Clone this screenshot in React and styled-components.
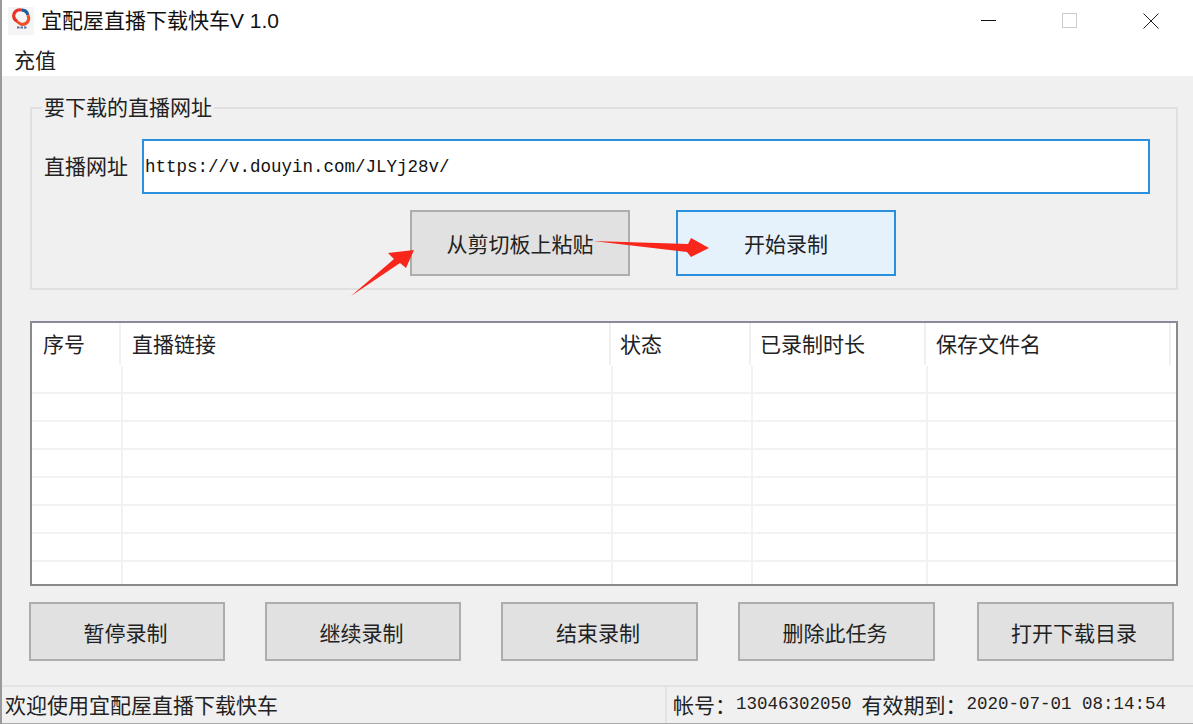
import React from "react";
import styled, { createGlobalStyle } from "styled-components";

const CJK = `"Noto Sans CJK SC", "Liberation Sans", sans-serif`;
const MONO = `"Liberation Mono", "Noto Sans CJK SC", monospace`;

const GlobalStyle = createGlobalStyle`
  html, body {
    margin: 0;
    padding: 0;
    background: #fff;
    overflow: hidden;
  }
  * {
    box-sizing: border-box;
  }
`;

const columns = [
  { title: "序号", width: 89, pad: 11 },
  { title: "直播链接", width: 490, pad: 11 },
  { title: "状态", width: 140, pad: 9 },
  { title: "已录制时长", width: 175, pad: 9 },
  { title: "保存文件名", width: 245, pad: 10 },
];

const rowColumns = [91, 490, 140, 175];
const actions = [
  { label: "暂停录制", width: 196 },
  { label: "继续录制", width: 196 },
  { label: "结束录制", width: 197 },
  { label: "删除此任务", width: 197 },
  { label: "打开下载目录", width: 197, last: true },
];

export default function App() {
  return (
    <Window>
      <GlobalStyle />
      <TitleBar>
        <AppTitle>
          <AppIcon />
          <TitleText>
            宜配屋直播下载快车<TitleLatin>V 1.0</TitleLatin>
          </TitleText>
        </AppTitle>
        <WindowControls>
          <ControlIcon viewBox="0 0 16 16">
            <path d="M0 7.5h15" stroke="#111" strokeWidth="1" />
          </ControlIcon>
          <ControlIcon viewBox="0 0 16 16">
            <rect x="0.5" y="0.5" width="14" height="14" fill="none" stroke="#ccc" />
          </ControlIcon>
          <ControlIcon viewBox="0 0 16 16">
            <path d="M0.5 0.5l15 15M15.5 0.5l-15 15" stroke="#222" strokeWidth="1" fill="none" />
          </ControlIcon>
        </WindowControls>
      </TitleBar>
      <MenuBar>
        <MenuItem>充值</MenuItem>
      </MenuBar>
      <Body>
        <Group>
          <Legend>要下载的直播网址</Legend>
          <UrlRow>
            <UrlLabel>直播网址</UrlLabel>
            <UrlField>https://v.douyin.com/JLYj28v/</UrlField>
          </UrlRow>
          <CommandRow>
            <PushButton>从剪切板上粘贴</PushButton>
            <PushButton $active>开始录制</PushButton>
          </CommandRow>
          <ArrowLayer viewBox="33 109 760 200">
            <path d="M353 296 L396 259 L390 253 L416 250 L408 268 L402 263 Z" fill="#f9261c" />
            <path d="M595 241 L690 244 L693 238 L711 248 L693 257 L689 252 Z" fill="#f9261c" />
          </ArrowLayer>
        </Group>
        <TaskTable>
          <HeaderRow>
            {columns.map((col) => (
              <HeaderCell key={col.title} $width={col.width} $pad={col.pad}>
                {col.title}
              </HeaderCell>
            ))}
          </HeaderRow>
          {Array.from({ length: 8 }).map((_, i) => (
            <EmptyRow key={i}>
              {rowColumns.map((w, j) => (
                <EmptyCell key={j} $width={w} />
              ))}
            </EmptyRow>
          ))}
        </TaskTable>
        <ActionRow>
          {actions.map((a) => (
            <ActionButton key={a.label} $width={a.width} $last={a.last}>
              {a.label}
            </ActionButton>
          ))}
        </ActionRow>
      </Body>
      <StatusBar>
        <StatusLeft>欢迎使用宜配屋直播下载快车</StatusLeft>
        <StatusRight>
          <span>帐号：</span>
          <StatusValue>13046302050</StatusValue>
          <StatusGap />
          <span>有效期到：</span>
          <StatusValue>2020-07-01 08:14:54</StatusValue>
        </StatusRight>
      </StatusBar>
    </Window>
  );
}

function AppIcon() {
  return (
    <IconBox viewBox="0 0 26 28">
      <rect width="26" height="28" fill="#f5f5f5" />
      <path d="M9.5 14.5 A6 6 0 0 1 14 3.2" fill="none" stroke="#e8332a" strokeWidth="3.2" />
      <path d="M14 3.2 A6 6 0 0 1 19.8 8" fill="none" stroke="#1f5f9a" strokeWidth="3.2" />
      <path d="M19.8 8 A6 6 0 0 1 9.5 14.5" fill="none" stroke="#f0502a" strokeWidth="3.2" />
      <path d="M9 20.5h10" stroke="#5a6f9a" strokeWidth="2" strokeDasharray="2.5 1" />
    </IconBox>
  );
}

const Window = styled.div`
  width: 1193px;
  height: 724px;
  display: flex;
  flex-direction: column;
  border-left: 2px solid #9a9a9a;
  background: #f0f0f0;
  color: #1c1c1c;
  font-family: ${CJK};
  font-size: 21px;
  overflow: hidden;
`;

const TitleBar = styled.div`
  height: 42px;
  background: #fff;
  display: flex;
  align-items: center;
  justify-content: space-between;
  padding: 0 34px 0 6px;
`;

const AppTitle = styled.div`
  display: flex;
  align-items: center;
  gap: 7px;
`;

const IconBox = styled.svg`
  width: 26px;
  height: 28px;
  flex: none;
`;

const TitleText = styled.div`
  color: #111;
  line-height: 28px;
  margin-top: -2px;
`;

const TitleLatin = styled.span`
  font-family: "Liberation Sans", sans-serif;
  font-size: 21px;
`;

const WindowControls = styled.div`
  display: flex;
  gap: 65px;
`;

const ControlIcon = styled.svg`
  width: 16px;
  height: 16px;
  display: block;
`;

const MenuBar = styled.div`
  height: 34px;
  background: #fff;
  display: flex;
  align-items: center;
  padding-left: 12px;
`;

const MenuItem = styled.div`
  color: #222;
  line-height: 30px;
`;

const Body = styled.div`
  flex: 1;
  display: flex;
  flex-direction: column;
  padding-top: 31px;
`;

const Group = styled.div`
  position: relative;
  height: 183px;
  margin: 0 15px 0 28px;
  border: 2px solid #e0e0e0;
  padding: 30px 26px 0 12px;
`;

const Legend = styled.div`
  position: absolute;
  top: -17px;
  left: 10px;
  background: #f0f0f0;
  padding: 0 2px;
  line-height: 28px;
  color: #222;
`;

const UrlRow = styled.div`
  display: flex;
  align-items: center;
  height: 55px;
`;

const UrlLabel = styled.div`
  width: 98px;
  flex: none;
  line-height: 28px;
  margin-top: -3px;
  color: #222;
`;

const UrlField = styled.div`
  flex: 1;
  height: 55px;
  background: #fff;
  border: 2px solid #2a8fdc;
  display: flex;
  align-items: center;
  padding: 1px 0 0 1px;
  font-family: ${MONO};
  font-size: 17.5px;
  color: #111;
`;

const CommandRow = styled.div`
  display: flex;
  gap: 46px;
  margin-top: 16px;
  margin-left: 366px;
`;

const PushButton = styled.div`
  width: 220px;
  height: 66px;
  display: flex;
  align-items: center;
  justify-content: center;
  background: ${(p) => (p.$active ? "#e5f1fb" : "#e1e1e1")};
  border: 2px solid ${(p) => (p.$active ? "#2a8fdc" : "#adadad")};
  color: #222;
`;

/* annotation arrows drawn over the group, viewBox is in page coordinates */
const ArrowLayer = styled.svg`
  position: absolute;
  left: -1px;
  top: 0;
  width: 760px;
  height: 200px;
  overflow: visible;
  pointer-events: none;
`;

const TaskTable = styled.div`
  margin: 31px 15px 0 28px;
  height: 265px;
  background: #fff;
  border: 2px solid #8a8a8a;
  border-top-color: #8a8a98;
  overflow: hidden;
`;

const HeaderRow = styled.div`
  display: flex;
  height: 43px;
`;

const HeaderCell = styled.div`
  width: ${(p) => p.$width}px;
  height: 42px;
  flex: none;
  padding-left: ${(p) => p.$pad}px;
  padding-top: 4px;
  line-height: 32px;
  color: #222;
  border-right: 2px solid #f0f0f0;
`;

const EmptyRow = styled.div`
  display: flex;
  height: 28px;
  border-bottom: 2px solid #f2f2f2;
`;

const EmptyCell = styled.div`
  width: ${(p) => p.$width}px;
  flex: none;
  border-right: 2px solid #f2f2f2;
`;

const ActionRow = styled.div`
  display: flex;
  gap: 40px;
  margin: 16px 19px 0 27px;
`;

const ActionButton = styled.div`
  width: ${(p) => p.$width}px;
  height: 59px;
  margin-left: ${(p) => (p.$last ? "auto" : "0")};
  padding-right: 3px;
  display: flex;
  align-items: center;
  justify-content: center;
  background: #e1e1e1;
  border: 2px solid #adadad;
  color: #222;
`;

const StatusBar = styled.div`
  height: 39px;
  display: flex;
  align-items: center;
  justify-content: space-between;
  background: #f0f0f0;
  border-top: 2px solid #e3e3e3;
  border-bottom: 1px solid #a8a8a8;
`;

const StatusLeft = styled.div`
  padding-left: 3px;
  color: #222;
  line-height: 30px;
  margin-top: -3px;
`;

const StatusRight = styled.div`
  width: 528px;
  height: 100%;
  display: flex;
  align-items: center;
  padding: 0 0 3px 6px;
  border-left: 2px solid #e3e3e3;
  color: #222;
`;

const StatusValue = styled.span`
  font-family: ${MONO};
  font-size: 17.5px;
`;

const StatusGap = styled.span`
  width: 10px;
`;
